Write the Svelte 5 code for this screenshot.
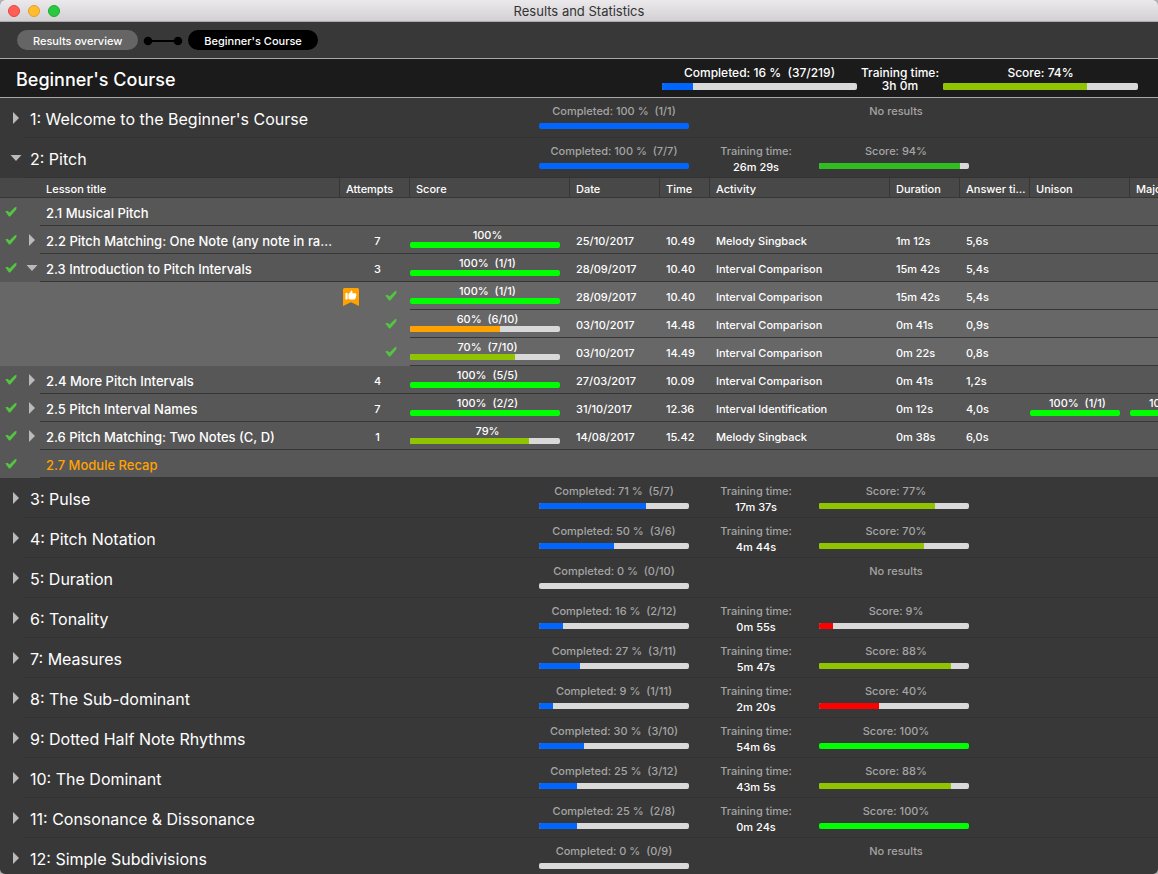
<script lang="ts">
  type Result = { value: number; detail?: string };

  type Attempt = {
    score?: Result;
    date?: string;
    time?: string;
    activity?: string;
    duration?: string;
    answer?: string;
    intervals?: Result[];
    best?: boolean;
  };

  type Lesson = Attempt & {
    title: string;
    count?: number;
    recap?: boolean;
    attempts?: Attempt[];
  };

  type Module = {
    title: string;
    completed: number;
    detail: string;
    time?: string;
    score?: number;
    lessons?: Lesson[];
  };

  const pitchLessons: Lesson[] = [
    { title: "2.1 Musical Pitch" },
    {
      title: "2.2 Pitch Matching: One Note (any note in range)",
      count: 7,
      score: { value: 100 },
      date: "25/10/2017",
      time: "10.49",
      activity: "Melody Singback",
      duration: "1m 12s",
      answer: "5,6s",
    },
    {
      title: "2.3 Introduction to Pitch Intervals",
      count: 3,
      score: { value: 100, detail: "1/1" },
      date: "28/09/2017",
      time: "10.40",
      activity: "Interval Comparison",
      duration: "15m 42s",
      answer: "5,4s",
      attempts: [
        {
          score: { value: 100, detail: "1/1" },
          date: "28/09/2017",
          time: "10.40",
          activity: "Interval Comparison",
          duration: "15m 42s",
          answer: "5,4s",
          best: true,
        },
        {
          score: { value: 60, detail: "6/10" },
          date: "03/10/2017",
          time: "14.48",
          activity: "Interval Comparison",
          duration: "0m 41s",
          answer: "0,9s",
        },
        {
          score: { value: 70, detail: "7/10" },
          date: "03/10/2017",
          time: "14.49",
          activity: "Interval Comparison",
          duration: "0m 22s",
          answer: "0,8s",
        },
      ],
    },
    {
      title: "2.4 More Pitch Intervals",
      count: 4,
      score: { value: 100, detail: "5/5" },
      date: "27/03/2017",
      time: "10.09",
      activity: "Interval Comparison",
      duration: "0m 41s",
      answer: "1,2s",
    },
    {
      title: "2.5 Pitch Interval Names",
      count: 7,
      score: { value: 100, detail: "2/2" },
      date: "31/10/2017",
      time: "12.36",
      activity: "Interval Identification",
      duration: "0m 12s",
      answer: "4,0s",
      intervals: [
        { value: 100, detail: "1/1" },
        { value: 100, detail: "1/1" },
      ],
    },
    {
      title: "2.6 Pitch Matching: Two Notes (C, D)",
      count: 1,
      score: { value: 79 },
      date: "14/08/2017",
      time: "15.42",
      activity: "Melody Singback",
      duration: "0m 38s",
      answer: "6,0s",
    },
    { title: "2.7 Module Recap", recap: true },
  ];

  const modules: Module[] = [
    { title: "1: Welcome to the Beginner's Course", completed: 100, detail: "1/1" },
    { title: "2: Pitch", completed: 100, detail: "7/7", time: "26m 29s", score: 94, lessons: pitchLessons },
    { title: "3: Pulse", completed: 71, detail: "5/7", time: "17m 37s", score: 77 },
    { title: "4: Pitch Notation", completed: 50, detail: "3/6", time: "4m 44s", score: 70 },
    { title: "5: Duration", completed: 0, detail: "0/10" },
    { title: "6: Tonality", completed: 16, detail: "2/12", time: "0m 55s", score: 9 },
    { title: "7: Measures", completed: 27, detail: "3/11", time: "5m 47s", score: 88 },
    { title: "8: The Sub-dominant", completed: 9, detail: "1/11", time: "2m 20s", score: 40 },
    { title: "9: Dotted Half Note Rhythms", completed: 30, detail: "3/10", time: "54m 6s", score: 100 },
    { title: "10: The Dominant", completed: 25, detail: "3/12", time: "43m 5s", score: 88 },
    { title: "11: Consonance & Dissonance", completed: 25, detail: "2/8", time: "0m 24s", score: 100 },
    { title: "12: Simple Subdivisions", completed: 0, detail: "0/9" },
  ];

  let openModules = $state<Record<number, boolean>>({ 1: true });
  let openLessons = $state<Record<number, boolean>>({ 2: true });

  function scoreColor(value: number) {
    if (value >= 100) return "#00ff00";
    if (value >= 90) return "#2fbd1f";
    if (value >= 70) return "#91c400";
    if (value >= 50) return "#ffa200";
    return "#ff0000";
  }
</script>

{#snippet bar(value: number, color: string)}
  <div class="bar">
    <div class="fill" style="width: {value}%; background: {color};"></div>
  </div>
{/snippet}

{#snippet scoreCell(result: Result | undefined)}
  {#if result}
    <div class="score">
      <span>{result.value}%{#if result.detail}&nbsp; ({result.detail}){/if}</span>
      {@render bar(result.value, scoreColor(result.value))}
    </div>
  {/if}
{/snippet}

{#snippet arrow(open: boolean)}
  <svg class="arrow" width="12" height="12" viewBox="0 0 12 12" aria-hidden="true">
    {#if open}
      <path d="M0.5 3h11L6 9z" />
    {:else}
      <path d="M3 0v12l6-6z" />
    {/if}
  </svg>
{/snippet}

{#snippet check()}
  <svg class="check" width="12" height="12" viewBox="0 0 12 12" aria-hidden="true">
    <path d="M0.3 5.6L2.4 4.8L4.6 6.6L9.6 1.6L11.6 0.8L11.2 3.6L5.2 10.6L4 10.6z" />
  </svg>
{/snippet}

{#snippet details(row: Attempt)}
  <td class="flush">{@render scoreCell(row.score)}</td>
  <td>{row.date ?? ""}</td>
  <td>{row.time ?? ""}</td>
  <td>{row.activity ?? ""}</td>
  <td>{row.duration ?? ""}</td>
  <td>{row.answer ?? ""}</td>
  <td class="flush">{@render scoreCell(row.intervals?.[0])}</td>
  <td class="flush">{@render scoreCell(row.intervals?.[1])}</td>
{/snippet}

<div class="window">
  <header class="titlebar">
    <div class="lights">
      <button class="close" aria-label="Close"></button>
      <button class="minimize" aria-label="Minimize"></button>
      <button class="zoom" aria-label="Zoom"></button>
    </div>
    <span>Results and Statistics</span>
  </header>

  <nav>
    <button class="crumb">Results overview</button>
    <svg width="40" height="12" viewBox="0 0 40 12" aria-hidden="true">
      <path d="M5 7h30" stroke="#000" stroke-width="2" />
      <circle cx="5" cy="7" r="4.3" />
      <circle cx="35" cy="7" r="4.3" />
    </svg>
    <button class="crumb current" aria-current="page">Beginner's Course</button>
  </nav>

  <section class="course">
    <h1>Beginner's Course</h1>
    <div class="stat">
      <span>Completed: 16 %&nbsp; (37/219)</span>
      {@render bar(16, "#0066ff")}
    </div>
    <div class="stat">
      <span>Training time:</span>
      <span>3h 0m</span>
    </div>
    <div class="stat">
      <span>Score: 74%</span>
      {@render bar(74, "#91c400")}
    </div>
  </section>

  <main>
    {#each modules as module, i}
      <section class="module">
        <button
          class="toggle"
          aria-label="Toggle {module.title}"
          aria-expanded={!!openModules[i]}
          onclick={() => (openModules[i] = !openModules[i])}
        >
          {@render arrow(!!openModules[i])}
        </button>
        <div class="summary">
          <h2>{module.title}</h2>
          <div class="stat">
            <span>Completed: {module.completed} %&nbsp; ({module.detail})</span>
            {@render bar(module.completed, "#0066ff")}
          </div>
          <div class="stat time">
            {#if module.time}
              <span>Training time:</span>
              <strong>{module.time}</strong>
            {/if}
          </div>
          <div class="stat result">
            {#if module.score !== undefined}
              <span>Score: {module.score}%</span>
              {@render bar(module.score, scoreColor(module.score))}
            {:else}
              <span>No results</span>
            {/if}
          </div>
        </div>
      </section>

      {#if openModules[i] && module.lessons}
        <div class="lessons">
          <table>
            <colgroup>
              <col class="w-check" />
              <col class="w-arrow" />
              <col class="w-title" />
              <col class="w-short" />
              <col class="w-score" />
              <col class="w-date" />
              <col class="w-time" />
              <col class="w-activity" />
              <col class="w-short" />
              <col class="w-short" />
              <col class="w-interval" />
              <col class="w-interval" />
            </colgroup>
            <thead>
              <tr>
                <th colspan="2" class="plain"></th>
                <th>Lesson title</th>
                <th>Attempts</th>
                <th>Score</th>
                <th>Date</th>
                <th>Time</th>
                <th>Activity</th>
                <th>Duration</th>
                <th>Answer time</th>
                <th>Unison</th>
                <th>Major second</th>
              </tr>
            </thead>
            <tbody>
              {#each module.lessons as lesson, j}
                <tr>
                  <td class="icon">{@render check()}</td>
                  <td class="icon">
                    {#if lesson.score}
                      <button
                        class="toggle"
                        aria-label="Toggle {lesson.title}"
                        aria-expanded={!!openLessons[j]}
                        onclick={() => (openLessons[j] = !openLessons[j])}
                      >
                        {@render arrow(!!openLessons[j])}
                      </button>
                    {/if}
                  </td>
                  <td class="title" class:recap={lesson.recap}>{lesson.title}</td>
                  <td class="count">{lesson.count ?? ""}</td>
                  {@render details(lesson)}
                </tr>
                {#if openLessons[j]}
                  {#each lesson.attempts ?? [] as attempt}
                    <tr class="attempt">
                      <td colspan="3" class="icon"></td>
                      <td class="icon">
                        <div class="marks">
                          {#if attempt.best}
                            <svg width="16" height="20" viewBox="0 0 16 20" role="img" aria-label="Best attempt">
                              <g transform="translate(0 2)">
                                <path d="M1.5 0h13q1.5 0 1.5 1.5V18L8 14.2L0 18V1.5Q0 0 1.5 0z" fill="#ffa200" />
                                <path d="M2.4 5h2.2v6.5H2.4z" fill="#fff" />
                                <path
                                  d="M5.4 6L7.8 3.8V2.6Q9.8 2 9.5 5.2H12.6Q13.8 5.4 13.2 6.7Q13.8 7.4 13 8.2Q13.4 9.1 12.6 9.7Q12.7 11.5 11 11.5H7.2L5.4 10.8z"
                                  fill="#fff"
                                />
                              </g>
                            </svg>
                          {/if}
                          {@render check()}
                        </div>
                      </td>
                      {@render details(attempt)}
                    </tr>
                  {/each}
                {/if}
              {/each}
            </tbody>
          </table>
        </div>
      {/if}
    {/each}
  </main>
</div>

<style>
  :global(body) {
    margin: 0;
    background: #b4b4b4;
  }

  .window {
    display: flex;
    flex-direction: column;
    height: 100vh;
    overflow: hidden;
    border-radius: 5px;
    background: #383838;
    color: #fff;
    font: 500 11px/16px Inter, sans-serif;
  }

  button {
    padding: 0;
    border: 0;
    background: none;
    color: inherit;
    font: inherit;
  }

  h1,
  h2 {
    flex: 1;
    min-width: 0;
    margin: 0;
    font-weight: 500;
    white-space: nowrap;
  }

  .titlebar {
    display: grid;
    grid-template-columns: 1fr auto 1fr;
    align-items: center;
    flex: none;
    box-sizing: border-box;
    height: 22px;
    padding: 0 8px;
    border-bottom: 1px solid #acaaac;
    background: linear-gradient(#ebe9eb, #d2d0d2);
    color: #333;
    font-size: 13px;
    font-weight: 400;
  }

  .lights {
    display: flex;
    gap: 8px;
  }

  .lights button {
    box-sizing: border-box;
    width: 12px;
    height: 12px;
    border: 1px solid #e2463f;
    border-radius: 50%;
    background: #ff5f57;
  }

  .lights .minimize {
    border-color: #e0a028;
    background: #ffbd2e;
  }

  .lights .zoom {
    border-color: #1dad2c;
    background: #28c940;
  }

  nav {
    display: flex;
    align-items: center;
    flex: none;
    gap: 5px;
    height: 36px;
    padding: 0 17px;
  }

  .crumb {
    box-sizing: border-box;
    height: 20px;
    padding: 2px 16px 0;
    border-radius: 10px;
    background: #656565;
    line-height: 18px;
  }

  .crumb.current {
    background: #000;
  }

  .course {
    display: flex;
    align-items: center;
    flex: none;
    height: 38px;
    padding: 0 20px 0 16px;
    border-top: 1px solid #a8a8a8;
    border-bottom: 1px solid #a8a8a8;
    background: #1b1b1b;
    font-size: 12px;
    line-height: 13px;
  }

  h1 {
    padding-top: 3px;
    font-size: 18px;
    line-height: 24px;
  }

  .stat {
    display: flex;
    flex-direction: column;
    width: 150px;
    text-align: center;
    white-space: nowrap;
  }

  .course .stat {
    align-self: stretch;
    width: 195px;
    padding-top: 7px;
  }

  .course .stat:nth-child(3) {
    width: 86px;
  }

  .bar {
    height: 6px;
    overflow: hidden;
    border-radius: 2px;
    background: #d9d9d9;
  }

  .course .bar {
    height: 7px;
    margin-top: 4px;
  }

  .fill {
    height: 100%;
  }

  main {
    flex: 1;
    min-height: 0;
    overflow: hidden;
  }

  .module {
    display: flex;
    height: 40px;
  }

  .toggle {
    display: flex;
    align-items: center;
    justify-content: center;
  }

  .module .toggle {
    width: 24px;
    padding-left: 8px;
    box-sizing: border-box;
  }

  .arrow {
    display: block;
    fill: #bababa;
  }

  .summary {
    display: flex;
    flex: 1;
    box-sizing: border-box;
    padding: 5px 189px 0 6px;
    border-bottom: 1px solid #323232;
    color: #a5a5a5;
  }

  h2 {
    color: #fff;
    font-size: 16px;
    font-weight: 400;
    line-height: 32px;
  }

  .summary .time {
    width: 130px;
    padding-left: 4px;
    box-sizing: border-box;
  }

  .summary .result span {
    padding-left: 4px;
  }

  .summary .bar {
    margin-top: 4px;
  }

  .summary strong {
    color: #fff;
    font-weight: 500;
  }

  .lessons {
    overflow: hidden;
    background: #575757;
  }

  table {
    width: 1230px;
    border-spacing: 0;
    table-layout: fixed;
  }

  .w-check {
    width: 24px;
  }

  .w-arrow {
    width: 16px;
  }

  .w-title {
    width: 300px;
  }

  .w-short {
    width: 70px;
  }

  .w-score {
    width: 160px;
  }

  .w-date {
    width: 90px;
  }

  .w-time {
    width: 50px;
  }

  .w-activity {
    width: 180px;
  }

  .w-interval {
    width: 100px;
  }

  th,
  td {
    box-sizing: border-box;
    overflow: hidden;
    padding: 2px 4px 0 6px;
    border-bottom: 1px solid #363636;
    text-align: left;
    text-overflow: ellipsis;
    white-space: nowrap;
    font-weight: 500;
  }

  th {
    height: 20px;
    padding-right: 0;
    border-right: 1px solid #363636;
    background: #484848;
  }

  th.plain {
    border-right: 0;
  }

  td {
    height: 28px;
  }

  .title {
    font-size: 13px;
  }

  .recap {
    color: #ffa200;
  }

  .count {
    padding: 2px 0 0 5px;
    text-align: center;
  }

  .flush {
    padding: 0;
    vertical-align: top;
  }

  .icon {
    padding: 0;
    border-bottom: 0;
  }

  .icon > .check {
    display: block;
    margin-left: 5px;
  }

  .icon > .toggle {
    margin-left: 2px;
  }

  .check {
    fill: #52c63e;
  }

  .attempt {
    background: #676767;
  }

  .marks {
    display: flex;
    align-items: center;
    justify-content: flex-end;
    gap: 26px;
    padding-right: 13px;
  }

  .score {
    display: flex;
    flex-direction: column;
    margin-right: 10px;
    padding-top: 2px;
    line-height: 14px;
    text-align: center;
  }

  .score span {
    padding-left: 5px;
  }
</style>
